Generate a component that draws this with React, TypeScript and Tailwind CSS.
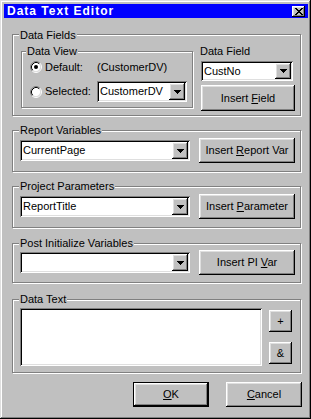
import React from "react";

const raised =
  "shadow-[inset_-1px_-1px_0_#000,inset_1px_1px_0_#fff,inset_-2px_-2px_0_#808080,inset_2px_2px_0_#dfdfdf]";
const sunken =
  "shadow-[inset_1px_1px_0_#808080,inset_-1px_-1px_0_#fff,inset_2px_2px_0_#000,inset_-2px_-2px_0_#dfdfdf]";
const etched =
  "border border-[#808080] shadow-[1px_1px_0_#fff,inset_1px_1px_0_#fff]";

function Arrow() {
  return (
    <svg width="7" height="4" viewBox="0 0 7 4" shapeRendering="crispEdges">
      <rect x="0" y="0" width="7" height="1" fill="#000" />
      <rect x="1" y="1" width="5" height="1" fill="#000" />
      <rect x="2" y="2" width="3" height="1" fill="#000" />
      <rect x="3" y="3" width="1" height="1" fill="#000" />
    </svg>
  );
}

function Combo({ w, h, text }: { w: string; h: string; text: string }) {
  return (
    <div className={`flex bg-white p-[2px] ${sunken} ${w} ${h}`}>
      <div className="flex-1 flex items-center pl-[1px] text-black leading-[13px] overflow-hidden whitespace-nowrap">
        {text}
      </div>
      <div
        className={`w-[16px] h-full bg-[#c0c0c0] flex items-center justify-center ${raised}`}
      >
        <Arrow />
      </div>
    </div>
  );
}

function Radio({ checked }: { checked: boolean }) {
  return (
    <svg width="12" height="12" viewBox="0 0 12 12">
      <circle cx="6" cy="6" r="4.5" fill="#fff" />
      <path d="M2.11 9.89 A5.5 5.5 0 0 1 9.89 2.11" stroke="#808080" strokeWidth="1" fill="none" />
      <path d="M9.89 2.11 A5.5 5.5 0 0 1 2.11 9.89" stroke="#fff" strokeWidth="1" fill="none" />
      <path d="M2.82 9.18 A4.5 4.5 0 0 1 9.18 2.82" stroke="#000" strokeWidth="1" fill="none" />
      <path d="M9.18 2.82 A4.5 4.5 0 0 1 2.82 9.18" stroke="#dfdfdf" strokeWidth="1" fill="none" />
      {checked && <circle cx="6" cy="6" r="2" fill="#000" />}
    </svg>
  );
}

function Btn({
  w,
  h,
  children,
  def,
}: {
  w: string;
  h: string;
  children: React.ReactNode;
  def?: boolean;
}) {
  if (def) {
    return (
      <div className={`border border-black ${w} ${h} flex`}>
        <div
          className={`flex-1 bg-[#c0c0c0] flex items-center justify-center leading-[13px] ${raised}`}
        >
          <span className="whitespace-pre">{children}</span>
        </div>
      </div>
    );
  }
  return (
    <div
      className={`bg-[#c0c0c0] flex items-center justify-center leading-[13px] ${raised} ${w} ${h}`}
    >
      <span className="whitespace-pre">{children}</span>
    </div>
  );
}

function Legend({ children, ml, mt }: { children: React.ReactNode; ml: string; mt: string }) {
  return (
    <div className={`${mt} ${ml} self-start px-[1px] bg-[#c0c0c0] leading-[13px] whitespace-nowrap`}>
      {children}
    </div>
  );
}

function U({ children }: { children: React.ReactNode }) {
  return <span className="underline underline-offset-[1px]">{children}</span>;
}

export default function App() {
  return (
    <div
      className={`w-[311px] h-[419px] bg-[#c0c0c0] flex flex-col pl-[4px] pr-[3px] pt-[4px] text-[11px] text-black font-['Liberation_Sans',Arial,sans-serif] ${"shadow-[inset_-1px_-1px_0_#000,inset_1px_1px_0_#dfdfdf,inset_-2px_-2px_0_#808080,inset_2px_2px_0_#fff]"}`}
    >
      {/* Title bar */}
      <div className="h-[14px] bg-[#0000ff] flex items-center justify-between pl-[3px] pr-[3px]">
        <span className="text-white font-bold text-[12px] leading-[14px] tracking-[1px]">
          Data Text Editor
        </span>
        <div className={`w-[13px] h-[11px] bg-[#c0c0c0] flex items-center justify-center ${raised}`}>
          <svg width="8" height="7" viewBox="0 0 8 7" shapeRendering="crispEdges">
            <rect x="0" y="0" width="2" height="1" fill="#000" />
            <rect x="6" y="0" width="2" height="1" fill="#000" />
            <rect x="1" y="1" width="2" height="1" fill="#000" />
            <rect x="5" y="1" width="2" height="1" fill="#000" />
            <rect x="2" y="2" width="4" height="1" fill="#000" />
            <rect x="3" y="3" width="2" height="1" fill="#000" />
            <rect x="2" y="4" width="4" height="1" fill="#000" />
            <rect x="1" y="5" width="2" height="1" fill="#000" />
            <rect x="5" y="5" width="2" height="1" fill="#000" />
            <rect x="0" y="6" width="2" height="1" fill="#000" />
            <rect x="6" y="6" width="2" height="1" fill="#000" />
          </svg>
        </div>
      </div>

      {/* Body */}
      <div className="pl-[8px] flex flex-col">
        {/* Data Fields */}
        <div className={`mt-[16px] w-[289px] h-[82px] flex flex-col ${etched}`}>
          <Legend mt="-mt-[6px]" ml="ml-[6px]">Data Fields</Legend>
          <div className="flex mt-[9px] ml-[8px]">
            <div className={`w-[172px] h-[57px] flex flex-col ${etched}`}>
              <Legend mt="-mt-[7px]" ml="ml-[4px]">Data View</Legend>
              <div className="flex items-center h-[12px] mt-[3px] ml-[8px]">
                <Radio checked />
                <span className="ml-[3px] w-[52px] leading-[13px]">Default:</span>
                <span className="leading-[13px]">(CustomerDV)</span>
              </div>
              <div className="flex items-center h-[21px] mt-[8px] ml-[8px]">
                <Radio checked={false} />
                <span className="ml-[3px] w-[52px] leading-[13px]">Selected:</span>
                <Combo w="w-[90px]" h="h-[21px]" text="CustomerDV" />
              </div>
            </div>
            <div className="flex flex-col ml-[8px] -mt-[6px]">
              <div className="leading-[13px] -ml-[1px]">Data Field</div>
              <div className="mt-[3px]">
                <Combo w="w-[92px]" h="h-[20px]" text="CustNo" />
              </div>
              <div className="mt-[4px]">
                <Btn w="w-[94px]" h="h-[26px]">
                  Insert <U>F</U>ield
                </Btn>
              </div>
            </div>
          </div>
        </div>

        {/* Report Variables */}
        <div className={`mt-[14px] w-[289px] h-[42px] flex flex-col ${etched}`}>
          <Legend mt="-mt-[7px]" ml="ml-[6px]">Report Variables</Legend>
          <div className="flex items-center mt-[1px] ml-[7px]">
            <Combo w="w-[170px]" h="h-[21px]" text="CurrentPage" />
            <div className="ml-[9px]">
              <Btn w="w-[96px]" h="h-[25px]">
                Insert <U>R</U>eport Var
              </Btn>
            </div>
          </div>
        </div>

        {/* Project Parameters */}
        <div className={`mt-[14px] w-[289px] h-[42px] flex flex-col ${etched}`}>
          <Legend mt="-mt-[7px]" ml="ml-[6px]">Project Parameters</Legend>
          <div className="flex items-center mt-[1px] ml-[7px]">
            <Combo w="w-[170px]" h="h-[21px]" text="ReportTitle" />
            <div className="ml-[9px]">
              <Btn w="w-[96px]" h="h-[25px]">
                Insert <U>P</U>arameter
              </Btn>
            </div>
          </div>
        </div>

        {/* Post Initialize Variables */}
        <div className={`mt-[15px] w-[289px] h-[40px] flex flex-col ${etched}`}>
          <Legend mt="-mt-[7px]" ml="ml-[6px]">Post Initialize Variables</Legend>
          <div className="flex items-center mt-[0px] ml-[7px]">
            <Combo w="w-[170px]" h="h-[21px]" text="" />
            <div className="ml-[9px]">
              <Btn w="w-[96px]" h="h-[25px]">
                Insert PI <U>V</U>ar
              </Btn>
            </div>
          </div>
        </div>

        {/* Data Text */}
        <div className={`mt-[16px] w-[289px] h-[74px] flex flex-col ${etched}`}>
          <Legend mt="-mt-[7px]" ml="ml-[6px]">Data Text</Legend>
          <div className="flex mt-[2px] ml-[7px]">
            <div className={`w-[242px] h-[58px] bg-white ${sunken}`} />
            <div className="flex flex-col ml-[7px] mt-[2px]">
              <Btn w="w-[23px]" h="h-[22px]">+</Btn>
              <div className="mt-[10px]">
                <Btn w="w-[23px]" h="h-[22px]">&amp;</Btn>
              </div>
            </div>
          </div>
        </div>

        {/* OK / Cancel */}
        <div className="mt-[9px] w-[290px] flex justify-end">
          <Btn def w="w-[76px]" h="h-[25px]">
            <U>O</U>K
          </Btn>
          <div className="ml-[17px]">
            <Btn w="w-[76px]" h="h-[25px]">
              <U>C</U>ancel
            </Btn>
          </div>
        </div>
      </div>
    </div>
  );
}
